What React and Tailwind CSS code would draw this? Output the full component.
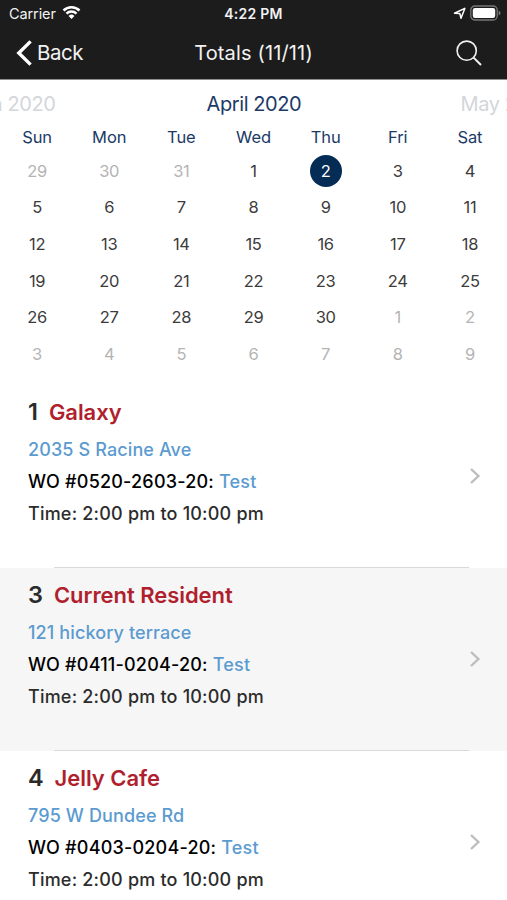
const weekdays = ['Sun', 'Mon', 'Tue', 'Wed', 'Thu', 'Fri', 'Sat'];

// April 2020 starts on a Wednesday, six full weeks are shown
const days = Array.from({ length: 42 }, (_, i) => {
    const date = new Date(2020, 2, 29 + i);
    return { key: i, day: date.getDate(), inMonth: date.getMonth() === 3 };
});

const orders = [
    { number: 1, name: 'Galaxy', address: '2035 S Racine Ave', wo: '0520-2603-20', type: 'Test', time: '2:00 pm to 10:00 pm' },
    { number: 3, name: 'Current Resident', address: '121 hickory terrace', wo: '0411-0204-20', type: 'Test', time: '2:00 pm to 10:00 pm' },
    { number: 4, name: 'Jelly Cafe', address: '795 W Dundee Rd', wo: '0403-0204-20', type: 'Test', time: '2:00 pm to 10:00 pm' },
];

function WifiIcon() {
    return (
        <svg width="19" height="15" viewBox="0 0 20 15" fill="none" stroke="#fff" strokeWidth="2.6">
            <path d="M1.6 5.4a12 12 0 0 1 16.8 0" />
            <path d="M4.7 8.7a7.6 7.6 0 0 1 10.6 0" />
            <path d="M10 14.4l-3.1-3.2a4.5 4.5 0 0 1 6.2 0z" fill="#fff" stroke="none" />
        </svg>
    );
}

function StatusBar() {
    return (
        <div className="h-7 grid grid-cols-3 items-center text-[#f2f2f2]">
            <div className="flex items-center gap-[6px] pl-[9px]">
                <span className="text-[14.5px] leading-7 tracking-[-0.1px]">Carrier</span>
                <div className="-mt-[3px]">
                    <WifiIcon />
                </div>
            </div>
            <span className="text-center text-[14px] leading-7 font-semibold tracking-[0.25px]">4:22 PM</span>
            <div className="-mt-[2px] flex items-center justify-end gap-[4px] pr-[6px]">
                <svg width="13" height="13" viewBox="0 0 13 13" fill="none" stroke="#fff" strokeWidth="1.5" strokeLinejoin="round">
                    <path d="M1.5 6.3L11.8 1.4 8 11.3 6.8 6.4z" />
                </svg>
                <svg width="31" height="16" viewBox="0 0 31 16">
                    <rect x="0.8" y="1" width="26.4" height="14" rx="4" fill="none" stroke="#77777a" strokeWidth="1.3" />
                    <rect x="2.8" y="3" width="22.4" height="10" rx="2.2" fill="#fff" />
                    <path d="M28.6 5.4q2 1 2 2.6t-2 2.6z" fill="#77777a" />
                </svg>
            </div>
        </div>
    );
}

function NavBar() {
    return (
        <div className="h-[51px] pb-[2px] grid grid-cols-3 items-center text-[#f2f2f2]">
            <div className="flex items-center gap-[4px] pl-4">
                <svg width="17" height="26" viewBox="0 0 17 26" fill="none" stroke="#fff" strokeWidth="3.4">
                    <path d="M14.6 1.4L2.8 13l11.8 11.6" />
                </svg>
                <span className="pt-px text-[20.5px] tracking-[-0.5px]">Back</span>
            </div>
            <h1 className="text-center text-[20px] tracking-[0.15px] whitespace-nowrap">Totals (11/11)</h1>
            <div className="flex justify-end pr-[25px]">
                <svg width="26" height="26" viewBox="0 0 26 26" fill="none" stroke="#f2f2f2" strokeWidth="1.6">
                    <circle cx="10.7" cy="10.7" r="9.6" />
                    <path d="M17.6 17.6l7.4 7.4" strokeWidth="2" />
                </svg>
            </div>
        </div>
    );
}

function Calendar() {
    return (
        <div className="h-[305px] overflow-hidden">
            <div className="h-[48px] flex justify-center items-center gap-[151px] text-[20px] leading-6 whitespace-nowrap text-[#d3d6da]">
                <span className="w-[119px] shrink-0 text-right tracking-[-0.4px]">March 2020</span>
                <span className="w-[94px] shrink-0 text-center text-[#1b3a66] tracking-[-0.4px]">April 2020</span>
                <span className="w-[119px] shrink-0 pl-[9px] tracking-[-0.4px]">May 2020</span>
            </div>
            <div className="px-px grid grid-cols-7 text-center text-[#1b3a66]">
                {weekdays.map(name => (
                    <span key={name} className="text-[16.5px] leading-[18px] tracking-[-0.1px]">{name}</span>
                ))}
            </div>
            <div className="mt-[6.8px] px-px grid grid-cols-7 auto-rows-[36.65px] place-items-center text-[16.5px] tracking-[-0.3px]">
                {days.map(({ key, day, inMonth }) => {
                    if (inMonth && day === 2) {
                        return (
                            <span key={key} className="size-8 rounded-full bg-[#052c55] text-white flex items-center justify-center">{day}</span>
                        );
                    }
                    return (
                        <span key={key} className={inMonth ? 'text-[#3c3c3c]' : 'text-[#b4b4b4]'}>{day}</span>
                    );
                })}
            </div>
        </div>
    );
}

function OrderRow({ order, shaded }) {
    return (
        <li className={`h-[183.2px] shrink-0 flex flex-col ${shaded ? 'bg-[#f6f6f6]' : 'bg-white'}`}>
            <div className="flex-1 flex items-center justify-between pl-7 pr-[26px]">
                <div className="pb-[26px] text-[18px] leading-8 font-medium whitespace-nowrap tracking-[0.2px]">
                    <h2 className="mb-[6px] flex gap-[11px] text-[22px] font-semibold tracking-[-0.05px] text-[#b01f2e]">
                        <span className="text-[23.5px] text-[#2a2a2a]">{order.number}</span>
                        {order.name}
                    </h2>
                    <p className="text-[#5b9bd0] tracking-[0.12px]">{order.address}</p>
                    <p className="text-black">WO #{order.wo}: <span className="text-[#5b9bd0]">{order.type}</span></p>
                    <p className="text-[#2c2c2c]">Time: {order.time}</p>
                </div>
                <svg width="12" height="18" viewBox="0 0 12 18" fill="none" stroke="#bdbdbd" strokeWidth="2.4">
                    <path d="M2 2l7.4 7L2 16" />
                </svg>
            </div>
            <div className="ml-[54px] mr-[38px] h-px bg-[#d9d9d9]" />
        </li>
    );
}

export default function App() {
    return (
        <div className="w-[507px] h-[900px] overflow-hidden bg-white font-[Inter,sans-serif]">
            <header className="bg-[#1c1c1c] border-b border-[#8e8e8e]">
                <StatusBar />
                <NavBar />
            </header>
            <Calendar />
            <ul className="flex flex-col">
                {orders.map((order, i) => (
                    <OrderRow key={order.number} order={order} shaded={i % 2 === 1} />
                ))}
            </ul>
        </div>
    );
}
